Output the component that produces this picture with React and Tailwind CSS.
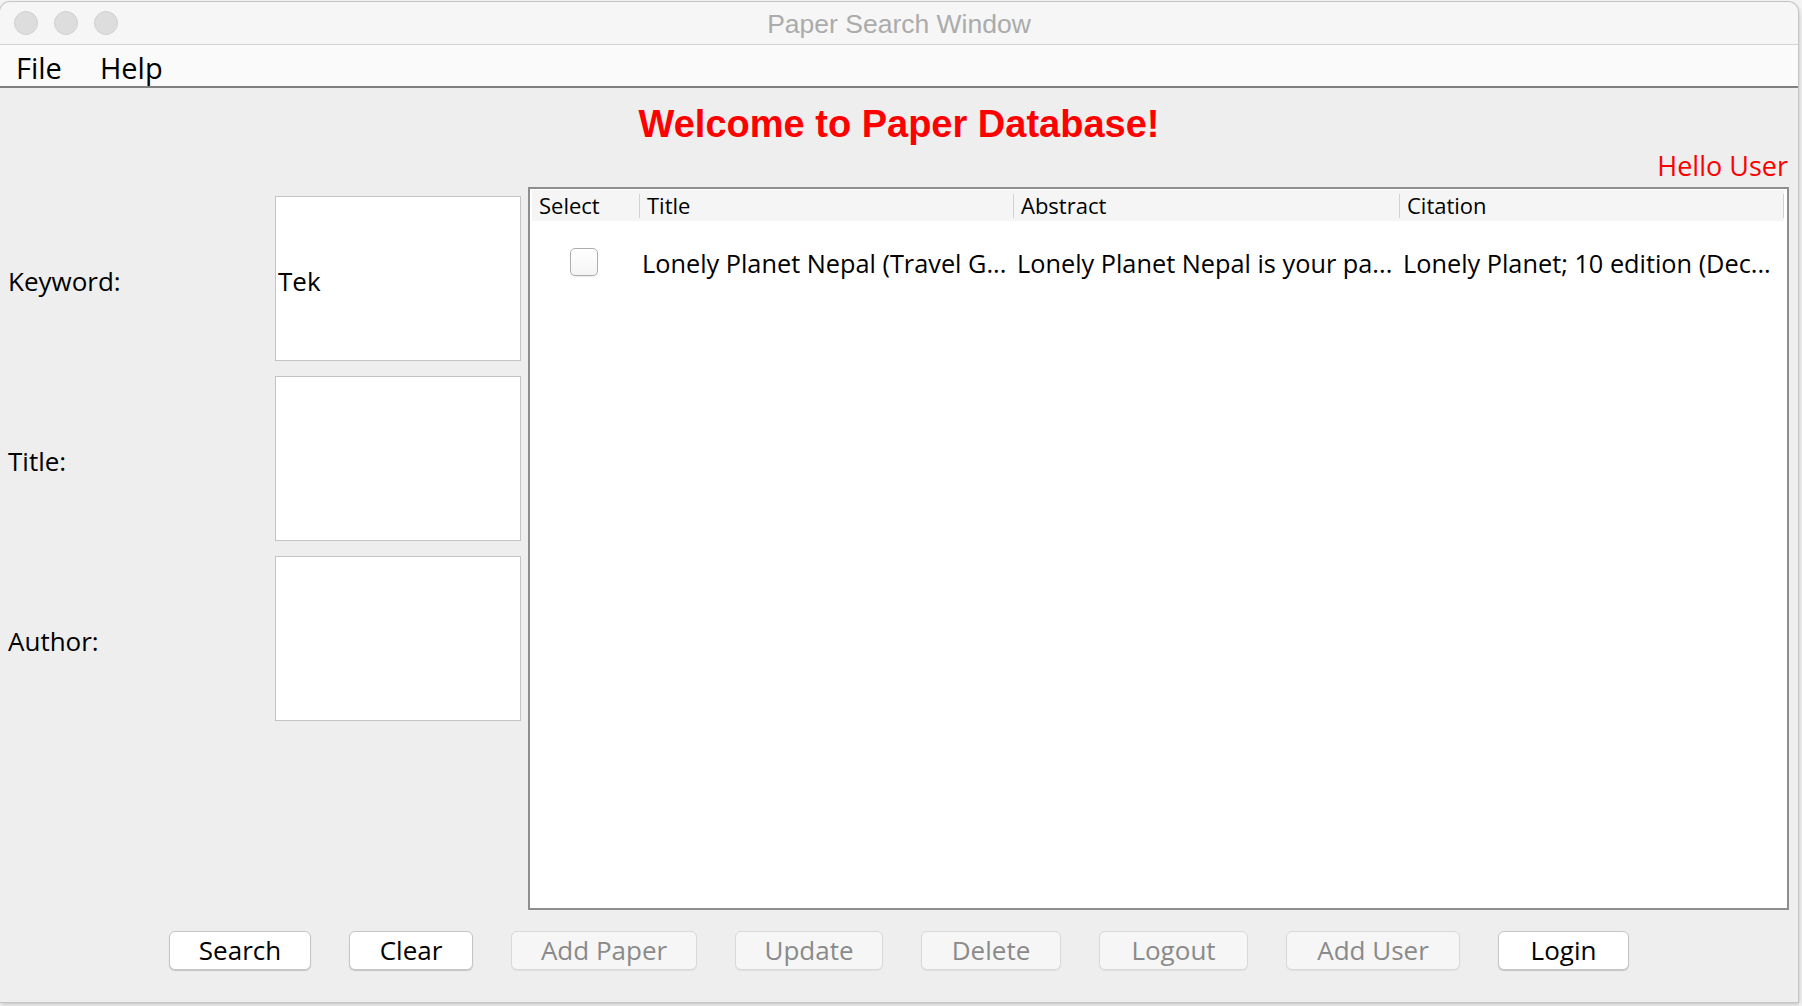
import React from "react";

const buttons = [
  { label: "Search", w: "w-[142px]", enabled: true },
  { label: "Clear", w: "w-[124px]", enabled: true },
  { label: "Add Paper", w: "w-[186px]", enabled: false },
  { label: "Update", w: "w-[148px]", enabled: false },
  { label: "Delete", w: "w-[140px]", enabled: false },
  { label: "Logout", w: "w-[149px]", enabled: false },
  { label: "Add User", w: "w-[174px]", enabled: false },
  { label: "Login", w: "w-[131px]", enabled: true },
];

function Field({ label, value }) {
  return (
    <>
      <div className="flex items-center pl-[8px] pt-[5px] text-[26px] text-black">{label}</div>
      <div className="flex items-center bg-white border border-[#c3c3c3] pl-[2px] pt-[5px] text-[26px] text-black">
        {value}
      </div>
    </>
  );
}

export default function App() {
  return (
    <div
      className="w-[1802px] h-[1006px] overflow-hidden bg-[#f4f4f4]"
      style={{ fontFamily: '"Open Sans", "Noto Sans", sans-serif' }}
    >
      <div className="mt-[2px] w-[1798px] h-[1000px] rounded-t-[10px] bg-[#eeeeee] flex flex-col overflow-hidden shadow-[0_0_0_1px_#c4c4c4,1px_2px_4px_rgba(0,0,0,0.25)]">
        {/* Title bar */}
        <div className="relative h-[43px] bg-[#f6f6f6] border-b border-[#d3d3d3] flex items-center justify-center shrink-0">
          <div className="absolute left-[14px] top-[9px] flex gap-[16px]">
            <div className="w-[24px] h-[24px] rounded-full bg-[#dddddd] border border-[#d0d0d0]" />
            <div className="w-[24px] h-[24px] rounded-full bg-[#dddddd] border border-[#d0d0d0]" />
            <div className="w-[24px] h-[24px] rounded-full bg-[#dddddd] border border-[#d0d0d0]" />
          </div>
          <span
            className="pt-[3px] text-[26.5px] text-[#ababab] leading-none"
            style={{ fontFamily: '"Liberation Sans", Arial, sans-serif' }}
          >
            Paper Search Window
          </span>
        </div>
        {/* Menu bar */}
        <div className="h-[43px] bg-[#fafafa] border-b-2 border-[#808080] flex items-center pt-[5px] shrink-0 text-[29px] text-black">
          <span className="ml-[16px]">File</span>
          <span className="ml-[38px]">Help</span>
        </div>
        {/* Content */}
        <div className="flex-1 flex flex-col">
          <div className="h-[70px] pt-[2px] flex items-center justify-center">
            <span
              className="text-[38px] font-bold text-[#ff0000] leading-none"
              style={{ fontFamily: '"Liberation Sans", Arial, sans-serif' }}
            >
              Welcome to Paper Database!
            </span>
          </div>
          <div className="h-[16px] leading-[16px] flex justify-end pr-[10px] text-[27px] text-[#ff0000]">
            Hello User
          </div>
          <div className="mt-[13px] h-[723px] flex">
            {/* Left form */}
            <div className="w-[528px] pt-[9px]">
              <div className="grid grid-cols-[275px_246px] grid-rows-[165px_165px_165px] gap-y-[15px]">
                <Field label="Keyword:" value="Tek" />
                <Field label="Title:" value="" />
                <Field label="Author:" value="" />
              </div>
            </div>
            {/* Table */}
            <div className="w-[1261px] border-2 border-[#8e8e8e] bg-white flex flex-col">
              <div className="mt-[1px] ml-[2px] mr-[3px] h-[31px] bg-[#f5f5f5] flex items-center text-[22px] text-black">
                <div className="w-[107px] pl-[7px]">Select</div>
                <div className="w-[1px] h-[24px] bg-[#d2d2d2]" />
                <div className="w-[373px] pl-[7px]">Title</div>
                <div className="w-[1px] h-[24px] bg-[#d2d2d2]" />
                <div className="w-[385px] pl-[7px]">Abstract</div>
                <div className="w-[1px] h-[24px] bg-[#d2d2d2]" />
                <div className="flex-1 pl-[7px]">Citation</div>
                <div className="w-[1px] h-[24px] bg-[#d2d2d2]" />
              </div>
              <div className="ml-[2px] h-[82px] flex items-center text-[25.3px] text-black whitespace-nowrap">
                <div className="w-[107px] flex justify-center pr-[4px]">
                  <div className="w-[28px] h-[28px] rounded-[5px] border border-[#adadad] bg-gradient-to-b from-white to-[#f4f4f4] shadow-[0_1px_1px_rgba(0,0,0,0.08)]" />
                </div>
                <div className="w-[374px] pl-[3px] pt-[3px]">Lonely Planet Nepal (Travel G...</div>
                <div className="w-[386px] pl-[4px] pt-[3px]">Lonely Planet Nepal is your pa...</div>
                <div className="flex-1 pl-[4px] pt-[3px]">Lonely Planet; 10 edition (Dec...</div>
              </div>
            </div>
          </div>
          {/* Buttons */}
          <div className="pt-[21px] flex justify-center gap-[38px]">
            {buttons.map((b) => (
              <div
                key={b.label}
                className={
                  b.enabled
                    ? `${b.w} h-[39px] rounded-[6px] bg-white border border-[#c6c6c6] shadow-[0_1px_1px_rgba(0,0,0,0.18)] flex items-center justify-center text-[26px] text-black`
                    : `${b.w} h-[39px] rounded-[6px] bg-[#f6f6f6] border border-[#d9d9d9] shadow-[0_1px_1px_rgba(0,0,0,0.06)] flex items-center justify-center text-[26px] text-[#8a8a8a]`
                }
              >
                {b.label}
              </div>
            ))}
          </div>
        </div>
      </div>
    </div>
  );
}
